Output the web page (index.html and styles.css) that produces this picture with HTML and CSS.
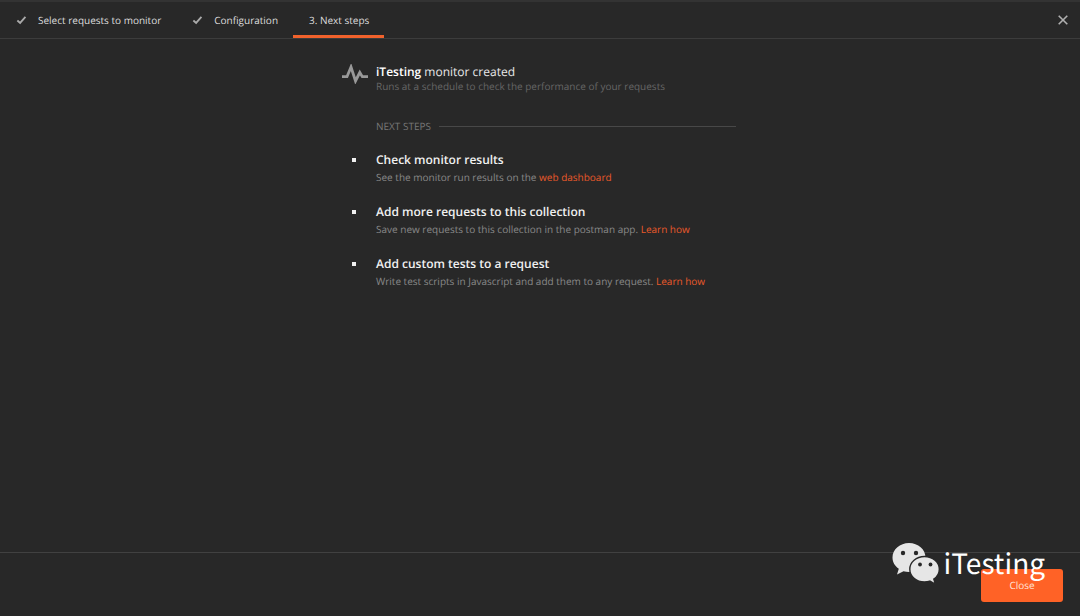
FILE: index.html
```html
<!DOCTYPE html>
<html lang="en">
<head>
<meta charset="utf-8">
<title>Next steps</title>
<link rel="stylesheet" href="styles.css">
</head>
<body>
<header class="header">
  <nav class="tabs">
    <button class="tab" type="button"><svg class="check" viewBox="0 0 12 10" aria-hidden="true"><path d="M1.5 5.5 4.5 8.2 10.3 1.7"/></svg>Select requests to monitor</button>
    <button class="tab" type="button"><svg class="check" viewBox="0 0 12 10" aria-hidden="true"><path d="M1.5 5.5 4.5 8.2 10.3 1.7"/></svg>Configuration</button>
    <button class="tab tab-active" type="button">3. Next steps</button>
  </nav>
  <button class="dismiss" type="button" aria-label="Dismiss"><svg viewBox="0 0 10 10" aria-hidden="true"><path d="M.7.7 9.3 9.3M9.3.7.7 9.3"/></svg></button>
</header>
<main class="content">
  <div class="panel">
    <section class="summary">
      <svg class="pulse" viewBox="0 0 26 20" aria-hidden="true"><path d="M0 12.700H5L9 3 13.500 17 17.800 8.500 20.300 12.700H26"/></svg>
      <div>
        <h1 class="title"><strong>iTesting</strong> monitor created</h1>
        <p class="subtitle">Runs at a schedule to check the performance of your requests</p>
      </div>
    </section>
    <h2 class="divider">NEXT STEPS</h2>
    <ul class="steps">
      <li class="step">
        <h3 class="step-title">Check monitor results</h3>
        <p class="step-text">See the monitor run results on the <a href="#">web dashboard</a></p>
      </li>
      <li class="step">
        <h3 class="step-title">Add more requests to this collection</h3>
        <p class="step-text">Save new requests to this collection in the postman app. <a href="#">Learn how</a></p>
      </li>
      <li class="step">
        <h3 class="step-title">Add custom tests to a request</h3>
        <p class="step-text">Write test scripts in Javascript and add them to any request. <a href="#">Learn how</a></p>
      </li>
    </ul>
  </div>
</main>
<footer class="footer">
  <button class="close" type="button">Close</button>
  <div class="watermark">
    <svg class="bubbles" viewBox="0 0 48 42" aria-hidden="true">
      <path class="bubble" d="M17 1C8 1 .5 7.400.5 15.500c0 4.700 2.500 8.700 6.300 11.300L5 32.500l6.500-3.300c1.800.5 3.600.8 5.500.8 9.200 0 16.500-6.400 16.500-14.500S26.200 1 17 1Z"/>
      <path class="bubble front" d="M32.500 14.500c-8.300 0-14.700 5.600-14.700 12.700s6.400 12.700 14.700 12.700c1.900 0 3.700-.3 5.300-.8l5.500 3-1.500-5c3.400-2.300 5.500-5.900 5.500-9.900 0-7.100-6.500-12.700-14.800-12.700Z"/>
      <g class="eyes"><circle cx="11" cy="11" r="2.200"/><circle cx="24" cy="11" r="2.200"/><circle cx="28" cy="22.500" r="1.900"/><circle cx="38.500" cy="22.500" r="1.900"/></g>
    </svg>
    <span>iTesting</span>
  </div>
</footer>
</body>
</html>
```

FILE: styles.css
```css
* { box-sizing: border-box; }
body {
  margin: 0;
  min-height: 100vh;
  display: flex;
  flex-direction: column;
  background: #282828;
  color: #ddd;
  font-family: "Open Sans", "Noto Sans", sans-serif;
  font-size: 10px;
  line-height: 16px;
  text-rendering: geometricPrecision;
}
h1, h2, h3, p, ul { margin: 0; padding: 0; font-size: inherit; font-weight: 400; }
button { border: 0; padding: 0; background: none; color: inherit; font: inherit; text-rendering: inherit; }
svg { display: block; fill: none; }
.header {
  display: flex;
  justify-content: space-between;
  height: 39px;
  border-top: 2px solid #333;
  border-bottom: 1px solid #3c3c3c;
}
.tabs { display: flex; }
.tab {
  display: flex;
  align-items: center;
  gap: 11px;
  height: 36px;
  padding: 0 15px 0 16px;
}
.tab-active { border-bottom: 3px solid #f1622c; padding-top: 3px; }
.check { width: 11px; height: 10px; stroke: #aaa; stroke-width: 2; }
.dismiss { padding: 0 12px; }
.dismiss svg { width: 10px; height: 10px; stroke: #b0b0b0; stroke-width: 1.6; }
.content { flex: 1; padding: 25px 18px 25px 16px; }
.panel { width: 100%; max-width: 394px; margin: 0 auto; }
.summary { display: flex; gap: 8px; }
.pulse { width: 26px; height: 20px; stroke: #999; stroke-width: 2.800; stroke-linejoin: miter; }
.title { font-size: 12px; color: #e8e8e8; }
.title strong { font-weight: 600; color: #fff; }
.subtitle { line-height: 12px; color: #666; }
.divider {
  display: flex;
  align-items: center;
  gap: 8px;
  margin: 26px 0 0 34px;
  color: #777;
}
.divider::after { content: ""; flex: 1; border-top: 1px solid #484848; }
.steps { list-style: none; margin-top: 18px; display: grid; gap: 18px; }
.step { display: grid; grid-template-columns: 34px 1fr; }
.step::before { content: ""; width: 4px; height: 4px; margin: 6px 0 0 10px; background: #f0f0f0; }
.step-title { font-size: 12px; font-weight: 600; color: #f0f0f0; }
.step-text { grid-column: 2; line-height: 18px; color: #888; }
.step-text a { color: #e8592a; text-decoration: none; }
.footer {
  position: relative;
  display: flex;
  justify-content: flex-end;
  padding: 16px 17px 14px;
  border-top: 1px solid #414141;
}
.close { height: 33px; width: 82px; padding-bottom: 2px; border-radius: 3px; background: #ff6226; color: #ffe4d8; }
.watermark {
  position: absolute;
  right: 35px;
  top: -11px;
  display: flex;
  align-items: center;
  gap: 3px;
  color: #fff;
  font: 28px/40px "Noto Sans CJK SC", sans-serif;
  pointer-events: none;
}
.bubbles { width: 48px; height: 42px; }
.bubble { fill: #e6e6e6; }
.front { stroke: #282828; stroke-width: 1.4; }
.eyes { fill: #282828; }
```
